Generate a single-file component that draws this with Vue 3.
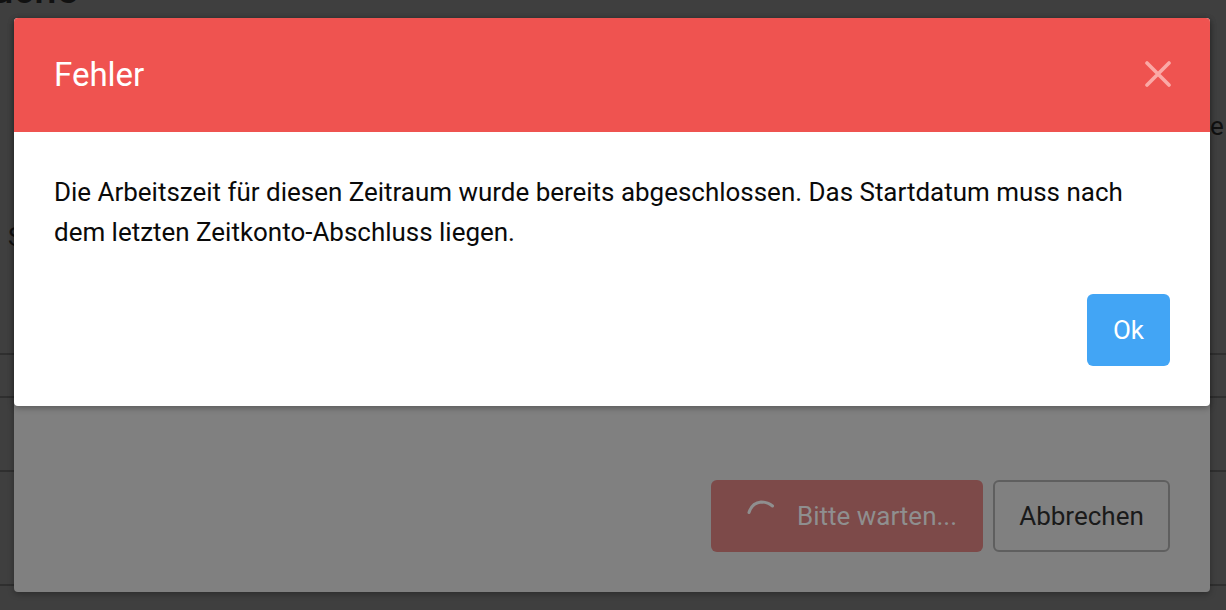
<script setup>
const rows = [43, 74, 114, 26]
</script>

<template>
  <div class="page">
    <div class="under">
      <div class="page-title">Suche</div>
      <div class="stray-right">e</div>
      <div class="stray-left">S</div>
      <div class="rows">
        <div v-for="h in rows" :key="h" class="row" :style="{ height: h + 'px' }"></div>
      </div>
    </div>

    <div class="sheet back">
      <div class="back-footer">
        <button class="btn wait">
          <svg class="spinner" width="32" height="32" viewBox="0 0 32 32" fill="none">
            <path d="M4 14.5 C6 8 11 4.5 16 4 C20 4 24 5 27.5 8" stroke="#8f8f8f" stroke-width="3" stroke-linecap="round" />
          </svg>
          <span>Bitte warten...</span>
        </button>
        <button class="btn cancel">Abbrechen</button>
      </div>
    </div>

    <div class="sheet dialog">
      <header class="head">
        <h2>Fehler</h2>
        <svg width="26" height="26" viewBox="0 0 26 26" fill="none">
          <path d="M2 2 L24 24 M24 2 L2 24" stroke="#faa9a6" stroke-width="3.6" stroke-linecap="round" />
        </svg>
      </header>
      <div class="body">
        <p>Die Arbeitszeit für diesen Zeitraum wurde bereits abgeschlossen. Das Startdatum muss nach dem letzten Zeitkonto-Abschluss liegen.</p>
        <div class="actions">
          <button class="btn ok">Ok</button>
        </div>
      </div>
    </div>
  </div>
</template>

<style>
html, body { margin: 0; background: #3f3f3f; }
</style>

<style scoped>
.page {
  position: relative;
  width: 1226px;
  height: 610px;
  overflow: hidden;
  background: #3f3f3f;
  font-family: Roboto, "Liberation Sans", sans-serif;
}
.under { height: 100%; display: flex; flex-direction: column; }
.page-title {
  position: absolute;
  left: -33px;
  top: -30px;
  font-size: 40px;
  line-height: 40px;
  font-weight: 500;
  color: #111;
}
.stray-right {
  position: absolute;
  left: 1210px;
  top: 110px;
  font-size: 26px;
  line-height: 32px;
  color: #111;
}
.stray-left {
  position: absolute;
  left: 8px;
  top: 221px;
  font-size: 26px;
  line-height: 32px;
  color: #111;
}
.rows { margin-top: 353px; }
.row { border-top: 2px solid #2f2f2f; box-sizing: border-box; }
.sheet {
  position: absolute;
  left: 14px;
  width: 1196px;
  border-radius: 4px;
  box-shadow: 0 2px 6px rgba(0, 0, 0, 0.3);
}
.back {
  top: 18px;
  height: 574px;
  background: #808080;
  display: flex;
  flex-direction: column;
  justify-content: flex-end;
}
.back-footer {
  display: flex;
  justify-content: flex-end;
  gap: 10px;
  padding: 0 40px 40px;
}
.btn {
  height: 72px;
  box-sizing: border-box;
  border-radius: 6px;
  font-family: inherit;
  font-size: 26px;
  padding: 0;
  display: flex;
  align-items: center;
  justify-content: center;
}
.wait {
  width: 272px;
  background: #7d4a49;
  border: 0;
  color: #8f8f8f;
  gap: 20px;
  padding-left: 8px;
}
.spinner { margin-top: -4px; }
.cancel {
  width: 177px;
  background: transparent;
  border: 2px solid #5f5f5f;
  color: #1a1a1a;
}
.dialog {
  top: 18px;
  overflow: hidden;
  background: #fff;
}
.head {
  height: 114px;
  box-sizing: border-box;
  padding: 0 39px 2px 40px;
  background: #ef5350;
  display: flex;
  align-items: center;
  justify-content: space-between;
}
.head h2 {
  margin: 0;
  font-size: 33px;
  font-weight: 400;
  color: #fff;
}
.body { padding: 40px 40px 40px; }
.body p {
  margin: 0;
  font-size: 25.96px;
  line-height: 40px;
  color: #0a0a0a;
}
.actions {
  margin-top: 42px;
  display: flex;
  justify-content: flex-end;
}
.ok {
  width: 83px;
  background: #42a5f5;
  border: 0;
  color: #fff;
}
</style>
